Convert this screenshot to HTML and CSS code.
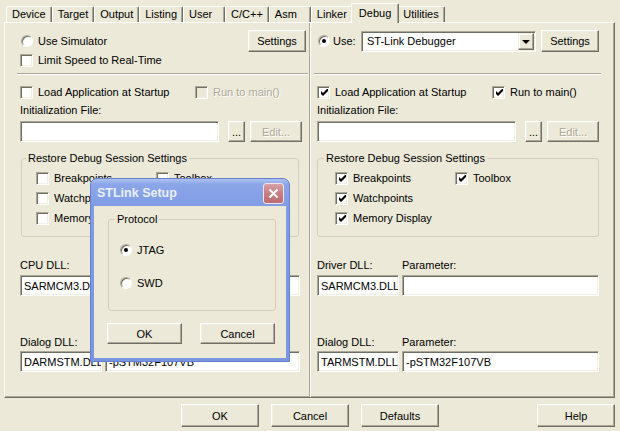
FILE: index.html
```html
<!DOCTYPE html>
<html lang="en">
<head>
  <meta charset="UTF-8">
  <title>Options for Target - Debug</title>
  <link rel="stylesheet" href="styles.css">
</head>
<body>
  <svg class="defs" width="0" height="0">
    <symbol id="tick" viewBox="0 0 7 7"><path d="M0 2 L2 4 L7 -1 L7 2 L2 7 L0 5 Z" fill="#000"/></symbol>
  </svg>
  <div class="window">
    <div class="tabs">
      <div class="tab">Device</div>
      <div class="tab">Target</div>
      <div class="tab">Output</div>
      <div class="tab">Listing</div>
      <div class="tab">User</div>
      <div class="tab">C/C++</div>
      <div class="tab">Asm</div>
      <div class="tab">Linker</div>
      <div class="tab active">Debug</div>
      <div class="tab">Utilities</div>
    </div>

    <div class="panel">
      <!-- simulator side -->
      <div class="col col-sim">
        <div class="row row-top">
          <div class="opt"><span class="radio"></span>Use Simulator</div>
          <button class="btn btn-settings">Settings</button>
        </div>
        <div class="row row-limit">
          <div class="opt"><span class="check"></span>Limit Speed to Real-Time</div>
        </div>
        <div class="sep"></div>
        <div class="row row-load">
          <div class="opt"><span class="check"></span>Load Application at Startup</div>
          <div class="opt disabled"><span class="check"></span>Run to main()</div>
        </div>
        <div class="caption">Initialization File:</div>
        <div class="file-row">
          <div class="edit"></div>
          <button class="btn btn-browse">...</button>
          <button class="btn btn-edit" disabled>Edit...</button>
        </div>
        <fieldset class="group">
          <legend>Restore Debug Session Settings</legend>
          <div class="group-grid">
            <div class="opt"><span class="check"></span>Breakpoints</div>
            <div class="opt"><span class="check"></span>Toolbox</div>
            <div class="opt"><span class="check"></span>Watchpoints</div>
            <div></div>
            <div class="opt"><span class="check"></span>Memory Display</div>
          </div>
        </fieldset>
        <div class="dll-labels"><span>CPU DLL:</span><span>Parameter:</span></div>
        <div class="dll-row"><div class="edit">SARMCM3.DLL</div><div class="edit"></div></div>
        <div class="dll-labels dll-second"><span>Dialog DLL:</span><span>Parameter:</span></div>
        <div class="dll-row"><div class="edit">DARMSTM.DLL</div><div class="edit">-pSTM32F107VB</div></div>
      </div>

      <!-- target driver side -->
      <div class="col col-target">
        <div class="row row-top">
          <div class="opt opt-use"><span class="radio on"></span>Use:</div>
          <div class="combo"><span class="combo-text">ST-Link Debugger</span><span class="drop"></span></div>
          <button class="btn btn-settings">Settings</button>
        </div>
        <div class="row row-limit"></div>
        <div class="sep"></div>
        <div class="row row-load">
          <div class="opt"><span class="check"><svg width="7" height="7"><use href="#tick"/></svg></span>Load Application at Startup</div>
          <div class="opt"><span class="check"><svg width="7" height="7"><use href="#tick"/></svg></span>Run to main()</div>
        </div>
        <div class="caption">Initialization File:</div>
        <div class="file-row">
          <div class="edit"></div>
          <button class="btn btn-browse">...</button>
          <button class="btn btn-edit" disabled>Edit...</button>
        </div>
        <fieldset class="group">
          <legend>Restore Debug Session Settings</legend>
          <div class="group-grid">
            <div class="opt"><span class="check"><svg width="7" height="7"><use href="#tick"/></svg></span>Breakpoints</div>
            <div class="opt"><span class="check"><svg width="7" height="7"><use href="#tick"/></svg></span>Toolbox</div>
            <div class="opt"><span class="check"><svg width="7" height="7"><use href="#tick"/></svg></span>Watchpoints</div>
            <div></div>
            <div class="opt"><span class="check"><svg width="7" height="7"><use href="#tick"/></svg></span>Memory Display</div>
          </div>
        </fieldset>
        <div class="dll-labels"><span>Driver DLL:</span><span>Parameter:</span></div>
        <div class="dll-row"><div class="edit">SARMCM3.DLL</div><div class="edit"></div></div>
        <div class="dll-labels dll-second"><span>Dialog DLL:</span><span>Parameter:</span></div>
        <div class="dll-row"><div class="edit">TARMSTM.DLL</div><div class="edit">-pSTM32F107VB</div></div>
      </div>
    </div>

    <div class="footer">
      <button class="btn">OK</button>
      <button class="btn">Cancel</button>
      <button class="btn">Defaults</button>
      <button class="btn btn-help">Help</button>
    </div>

    <!-- STLink setup popup -->
    <div class="modal">
      <div class="modal-title">
        <span>STLink Setup</span>
        <span class="modal-close">
          <svg width="11" height="11" viewBox="0 0 11 11"><path d="M1.5 1.5 L9.5 9.5 M9.5 1.5 L1.5 9.5" stroke="#fff" stroke-width="2"/></svg>
        </span>
      </div>
      <div class="modal-body">
        <fieldset class="group group-proto">
          <legend>Protocol</legend>
          <div class="opt"><span class="radio on"></span>JTAG</div>
          <div class="opt"><span class="radio"></span>SWD</div>
        </fieldset>
        <div class="modal-btns">
          <button class="btn">OK</button>
          <button class="btn">Cancel</button>
        </div>
      </div>
    </div>
  </div>
</body>
</html>
```

FILE: styles.css
```css
* { box-sizing: border-box; }
html, body { margin: 0; padding: 0; }
body {
  width: 620px; height: 431px; overflow: hidden;
  background: #ECE9D8;
  font: 11px/14px "Liberation Sans", Arial, sans-serif;
  color: #000;
}
.defs { position: absolute; }
.window { position: relative; width: 620px; height: 431px; padding-top: 3px; }

/* tab strip */
.tabs {
  display: flex; align-items: flex-end;
  height: 19px; padding-left: 6px;
  position: relative; z-index: 1;
}
.tab {
  height: 16px; min-width: 42px; padding: 0 5px;
  line-height: 14px; white-space: nowrap;
  border-top: 1px solid #fff; border-left: 1px solid #fff; border-right: 1px solid #716F64;
  border-radius: 2px 2px 0 0;
  box-shadow: inset -1px 0 #ACA899;
}
.tab.active {
  height: 20px; margin: 0 -2px -1px; padding: 2px 7px 0;
  background: #ECE9D8; position: relative;
}

.panel {
  display: grid; grid-template-columns: 305px 1fr;
  margin-left: 4px; width: 611px; height: 376px;
  border: 1px solid; border-color: #fff #716F64 #716F64 #fff;
  box-shadow: inset -1px -1px #ACA899;
}
.col { display: flex; flex-direction: column; }
.col-sim { padding: 7px 3px 0 15px; border-right: 1px solid #ACA899; }
.col-target { padding: 7px 15px 0 6px; border-left: 1px solid #fff; }

.row { display: flex; align-items: center; }
.row-top { height: 22px; }
.row-top .opt { margin-right: auto; margin-left: 1px; }
.row-limit { height: 16px; }
.row-load { display: grid; grid-template-columns: 175px auto; height: 16px; margin-top: 9px; }
.sep {
  height: 2px; margin: 5px -2px 0 -3px;
  border-top: 1px solid #ACA899; border-bottom: 1px solid #fff;
}
.caption { margin-top: 3px; height: 14px; }

.opt { display: flex; align-items: center; gap: 5px; height: 16px; white-space: nowrap; }
.opt.disabled { color: #ACA899; text-shadow: 1px 1px #fff; }
.opt-use { gap: 3px; }

.check {
  width: 13px; height: 13px; flex: none;
  display: flex; align-items: center; justify-content: center;
  background: #fff;
  border: 1px solid; border-color: #ACA899 #fff #fff #ACA899;
  box-shadow: inset 1px 1px #716F64, inset -1px -1px #F1EFE2;
}
.check svg { display: block; margin: 1px 0 0 1px; }
.disabled .check { background: #ECE9D8; }

.radio {
  width: 12px; height: 12px; flex: none; border-radius: 50%;
  display: flex; align-items: center; justify-content: center;
  background: #fff;
  border: 1px solid; border-color: #ACA899 #fff #fff #ACA899;
  box-shadow: inset 1px 1px #716F64;
}
.radio.on::after {
  content: ""; width: 4px; height: 4px; border-radius: 50%; background: #000;
}

.btn {
  font: inherit; color: #000; background: #ECE9D8;
  height: 22px; padding: 0; border-radius: 0;
  border: 1px solid; border-color: #fff #716F64 #716F64 #fff;
  box-shadow: inset -1px -1px #ACA899, inset 1px 1px #F1EFE2;
}
.btn:disabled { color: #ACA899; text-shadow: 1px 1px #fff; }
.btn-settings { width: 58px; }

.edit {
  height: 21px; background: #fff; padding: 3px 1px 0 3px;
  line-height: 14px; white-space: nowrap; overflow: hidden;
  border: 1px solid; border-color: #ACA899 #fff #fff #ACA899;
  box-shadow: inset 1px 1px #716F64, inset -1px -1px #F1EFE2;
}

.combo {
  display: flex; width: 175px; height: 21px; padding: 1px; margin-right: 5px;
  background: #fff;
  border: 1px solid; border-color: #ACA899 #fff #fff #ACA899;
  box-shadow: inset 1px 1px #716F64, inset -1px -1px #F1EFE2;
}
.combo-text { flex: 1; padding: 1px 0 0 4px; }
.drop {
  width: 16px; height: 17px;
  display: flex; align-items: center; justify-content: center;
  background: #ECE9D8;
  border: 1px solid; border-color: #F1EFE2 #716F64 #716F64 #F1EFE2;
  box-shadow: inset -1px -1px #ACA899, inset 1px 1px #fff;
}
.drop::after {
  content: ""; border-left: 4px solid transparent; border-right: 4px solid transparent;
  border-top: 4px solid #000; margin-top: 1px;
}

.file-row { display: flex; height: 21px; margin-top: 4px; }
.file-row .edit { width: 199px; }
.file-row .btn { height: 21px; }
.btn-browse { width: 17px; margin-left: 9px; }
.btn-edit { width: 52px; margin-left: 5px; }

/* group boxes */
.group {
  margin: 9px 7px 0 1px; padding: 5px 0 10px 0; min-width: 0;
  border: 1px solid #D0D0BF; border-radius: 3px;
}
.col-target .group { margin: 9px 0 0 0; }
.group legend { margin-left: 4px; padding: 0 2px; line-height: 14px; }
.col-target .group legend { margin-left: 6px; }
.group-grid { display: grid; grid-template-columns: 120px auto; row-gap: 4px; padding-left: 14px; }
.col-target .group-grid { padding-left: 17px; }

.dll-labels, .dll-row { display: grid; grid-template-columns: 82px 1fr; column-gap: 3px; }
.dll-labels { margin-top: 21px; height: 14px; }
.dll-row { margin-top: 3px; }
.dll-labels.dll-second { margin-top: 39px; }
.dll-second + .dll-row { margin-top: 2px; }
.col-sim .dll-labels, .col-sim .dll-row { margin-right: 6px; }

.footer { display: flex; gap: 12px; margin-top: 6px; padding: 0 5px 0 181px; }
.footer .btn { width: 78px; height: 23px; }
.footer .btn-help { margin-left: auto; }

/* floating STLink window */
.modal {
  position: absolute; left: 90px; top: 178px; z-index: 2;
  width: 200px; height: 184px;
  display: flex; flex-direction: column;
  padding: 0 3px 3px;
  background: linear-gradient(#AFC3F2, #8CA6E9 5px, #809CE4 26px, #7A96DF);
  border: 1px solid #6680CF; border-radius: 7px 7px 0 0;
}
.modal-title {
  height: 27px; flex: none;
  display: flex; align-items: center; justify-content: space-between;
  padding: 1px 2px 0 3px;
  color: #E9EEFC; font-weight: bold; font-size: 12.5px;
}
.modal-close {
  width: 21px; height: 21px;
  display: flex; align-items: center; justify-content: center;
  background: linear-gradient(#D7A1A6, #C67E84 50%, #BC6B72);
  border: 1px solid #F2E4E6; border-radius: 3px;
}
.modal-close svg { display: block; }
.modal-body { flex: 1; background: #ECE9D8; padding: 6px 0 0 14px; }
.group-proto {
  width: 168px; margin: 0; padding: 16px 0 19px 11px;
  display: flex; flex-direction: column; gap: 17px;
}
.group-proto legend { margin-left: -5px; }
.modal-btns { display: flex; gap: 18px; margin: 12px 0 0 -1px; }
.modal-btns .btn { width: 75px; height: 21px; }
```
